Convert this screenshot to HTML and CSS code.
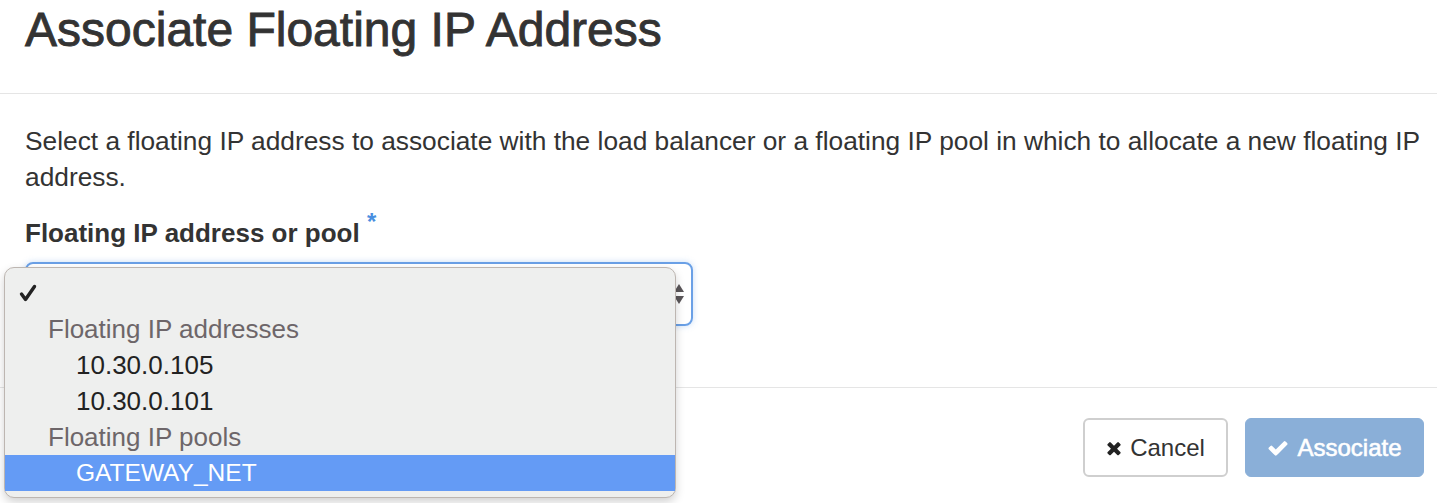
FILE: index.html
```html
<!DOCTYPE html>
<html>
<head>
<meta charset="utf-8">
<link rel="stylesheet" href="styles.css">
</head>
<body>
<div class="modal">
  <header class="modal-header">
    <h1 class="modal-title">Associate Floating IP Address</h1>
  </header>
  <div class="modal-body">
    <p class="help">Select a floating IP address to associate with the load balancer or a floating IP pool in which to allocate a new floating IP address.</p>
    <div class="form-group">
      <label class="field-label">Floating IP address or pool <span class="req">*</span></label>
      <div class="select-wrap">
        <div class="select">
          <svg class="select-arrows" width="12" height="22" viewBox="0 0 12 22"><path d="M6 1 L11 9 L1 9 Z" fill="#5a5659"/><path d="M1 13 L11 13 L6 21 Z" fill="#5a5659"/></svg>
        </div>
        <ul class="dropdown">
          <li class="opt opt-check"><svg width="18" height="18" viewBox="0 0 18 18"><path d="M2.5 10 L6.5 15.5 L15.5 2.5" fill="none" stroke="#222" stroke-width="3.4" stroke-linecap="round" stroke-linejoin="round"/></svg></li>
          <li class="opt group">Floating IP addresses</li>
          <li class="opt item">10.30.0.105</li>
          <li class="opt item">10.30.0.101</li>
          <li class="opt group">Floating IP pools</li>
          <li class="opt item selected">GATEWAY_NET</li>
        </ul>
      </div>
    </div>
  </div>
  <footer class="modal-footer">
    <button class="btn btn-cancel"><svg class="ico" width="16" height="20" viewBox="0 0 1408 1792"><path fill="#222" d="M1298 1322q0 40-28 68l-136 136q-28 28-68 28t-68-28l-294-294-294 294q-28 28-68 28t-68-28l-136-136q-28-28-28-68t28-68l294-294-294-294q-28-28-28-68t28-68l136-136q28-28 68-28t68 28l294 294 294-294q28-28 68-28t68 28l136 136q28 28 28 68t-28 68l-294 294 294 294q28 28 28 68z"/></svg>Cancel</button>
    <button class="btn btn-primary"><svg class="ico" width="22" height="22" viewBox="0 0 1792 1792"><path fill="#fff" d="M1671 566q0 40-28 68l-724 724-136 136q-28 28-68 28t-68-28l-136-136-362-362q-28-28-28-68t28-68l136-136q28-28 68-28t68 28l294 295 656-657q28-28 68-28t68 28l136 136q28 28 28 68z"/></svg>Associate</button>
  </footer>
</div>
</body>
</html>
```

FILE: styles.css
```css
html, body {
  margin: 0;
  padding: 0;
  background: #fff;
}
body {
  font-family: "Liberation Sans", Arial, Helvetica, sans-serif;
  color: #333;
  width: 1437px;
  height: 503px;
  overflow: hidden;
}
.modal-header {
  border-bottom: 1px solid #e5e5e5;
  padding: 4px 25px 0;
  box-sizing: border-box;
  height: 94px;
}
.modal-title {
  margin: 0;
  font-size: 48px;
  line-height: 52px;
  font-weight: normal;
  color: #333;
  -webkit-text-stroke: 0.9px #333;
}
.modal-body {
  padding: 29px 8px 0 25px;
  height: 293px;
  box-sizing: border-box;
}
.help {
  margin: 0;
  font-size: 26.3px;
  line-height: 36px;
}
.form-group {
  margin-top: 9px;
}
.field-label {
  display: block;
  font-size: 26px;
  line-height: 36px;
  font-weight: bold;
  color: #333;
}
.req {
  color: #4a8fe0;
  font-size: 24px;
  vertical-align: 12px;
  font-weight: bold;
  margin-left: 0;
}
.select-wrap {
  position: relative;
  margin-top: 11px;
  width: 668px;
}
.select {
  height: 64px;
  box-sizing: border-box;
  border: 2px solid #6aa0e6;
  border-radius: 8px;
  box-shadow: 0 0 6px rgba(102, 160, 230, 0.35);
  display: flex;
  justify-content: flex-end;
  align-items: center;
  padding-right: 6px;
}
.select-arrows {
  display: block;
}
.dropdown {
  position: absolute;
  left: -21px;
  top: 5px;
  width: 672px;
  height: 231px;
  box-sizing: border-box;
  margin: 0;
  padding: 7px 0 6px;
  list-style: none;
  background: #eeefee;
  border: 1px solid #bdb6b1;
  border-radius: 10px;
  box-shadow: 0 4px 10px rgba(0, 0, 0, 0.18);
  font-size: 26px;
}
.opt {
  height: 36px;
  line-height: 36px;
  color: #222;
  white-space: nowrap;
}
.opt-check {
  padding-left: 14px;
  display: flex;
  align-items: center;
}
.group {
  padding-left: 43px;
  color: #6d6669;
}
.item {
  padding-left: 71px;
}
.selected {
  background: #649bf5;
  color: #fff;
  font-size: 24.5px;
}
.modal-footer {
  border-top: 1px solid #e5e5e5;
  display: flex;
  justify-content: flex-end;
  gap: 17px;
  padding: 30px 13px 0 0;
}
.btn {
  height: 59px;
  box-sizing: border-box;
  border-radius: 6px;
  font-family: "Liberation Sans", Arial, Helvetica, sans-serif;
  font-size: 24px;
  display: flex;
  align-items: center;
  justify-content: center;
  gap: 8px;
  padding: 0;
  margin: 0;
}
.btn-cancel {
  width: 145px;
  background: #fff;
  border: 2px solid #cfcfcf;
  color: #333;
}
.btn-primary {
  width: 179px;
  background: #8aafd8;
  border: 1px solid #8aafd8;
  color: #fff;
  font-weight: normal;
  -webkit-text-stroke: 0.6px #fff;
}
.ico {
  display: block;
}
```
